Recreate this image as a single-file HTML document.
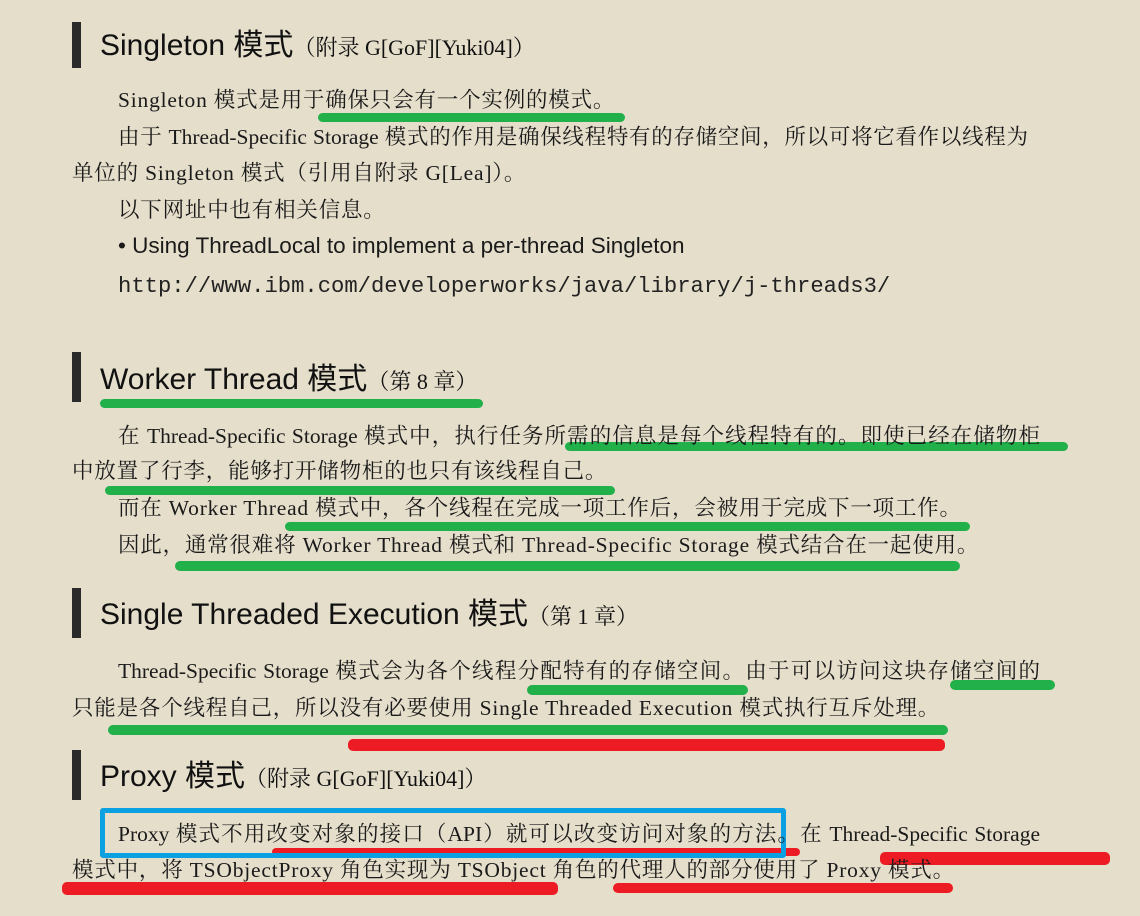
<!DOCTYPE html>
<html><head><meta charset="utf-8"><style>
html,body{margin:0;padding:0}
body{width:1140px;height:916px;background:#e5decb;position:relative;overflow:hidden;font-family:"Liberation Serif","Noto Serif CJK SC",serif;color:#1a1a1a}
.t{position:absolute;font-size:21.5px;line-height:24px;white-space:nowrap;letter-spacing:0.8px}
.j{letter-spacing:0;text-align:justify;text-align-last:justify;white-space:normal;height:26px;overflow:hidden}
.h{position:absolute;left:100px;font-family:"Liberation Sans","Noto Sans CJK SC",sans-serif;font-size:30px;line-height:34px;white-space:nowrap;color:#111}
.h small{font-family:"Liberation Serif","Noto Serif CJK SC",serif;font-size:22px}
.bar{position:absolute;left:72px;width:9px;background:#2a2a2a}
.u{position:absolute;border-radius:5px}
.g{background:#22b04a}.r{background:#ed1c24}
.m{position:absolute;font-family:"Liberation Mono",monospace;font-size:22.2px;line-height:24px;white-space:nowrap;color:#222}
.s{font-family:"Liberation Sans","Noto Sans CJK SC",sans-serif;font-size:22.5px;letter-spacing:0}
</style></head><body>
<div class="bar" style="top:22px;height:46px"></div>
<div class="h" style="top:29px">Singleton 模式<small>（附录 G[GoF][Yuki04]）</small></div>
<div class="u g" style="left:318px;top:113px;width:307px;height:9px"></div>
<div class="t" style="left:118px;top:88px">Singleton 模式是用于确保只会有一个实例的模式。</div>
<div class="t j" style="left:118px;top:125px;width:910px">由于 Thread-Specific Storage 模式的作用是确保线程特有的存储空间，所以可将它看作以线程为</div>
<div class="t" style="left:72px;top:161px">单位的 Singleton 模式（引用自附录 G[Lea]）。</div>
<div class="t" style="left:118px;top:198px">以下网址中也有相关信息。</div>
<div class="t s" style="left:118px;top:234px">• Using ThreadLocal to implement a per-thread Singleton</div>
<div class="m" style="left:118px;top:275px">http://www.ibm.com/developerworks/java/library/j-threads3/</div>

<div class="bar" style="top:352px;height:50px"></div>
<div class="u g" style="left:100px;top:399px;width:383px;height:9px"></div>
<div class="h" style="top:363px">Worker Thread 模式<small>（第 8 章）</small></div>
<div class="u g" style="left:565px;top:442px;width:503px;height:9px"></div>
<div class="u g" style="left:105px;top:486px;width:510px;height:9px"></div>
<div class="u g" style="left:285px;top:522px;width:685px;height:9px"></div>
<div class="u g" style="left:175px;top:561px;width:785px;height:10px"></div>
<div class="t j" style="left:118px;top:424px;width:922px">在 Thread-Specific Storage 模式中，执行任务所需的信息是每个线程特有的。即使已经在储物柜</div>
<div class="t" style="left:72px;top:459px">中放置了行李，能够打开储物柜的也只有该线程自己。</div>
<div class="t" style="left:118px;top:496px">而在 Worker Thread 模式中，各个线程在完成一项工作后，会被用于完成下一项工作。</div>
<div class="t" style="left:118px;top:533px">因此，通常很难将 Worker Thread 模式和 Thread-Specific Storage 模式结合在一起使用。</div>

<div class="bar" style="top:588px;height:50px"></div>
<div class="h" style="top:598px">Single Threaded Execution 模式<small>（第 1 章）</small></div>
<div class="u g" style="left:527px;top:685px;width:221px;height:10px"></div>
<div class="u g" style="left:950px;top:680px;width:105px;height:10px"></div>
<div class="u g" style="left:108px;top:725px;width:840px;height:10px"></div>
<div class="u r" style="left:348px;top:739px;width:597px;height:12px"></div>
<div class="t j" style="left:118px;top:659px;width:922px">Thread-Specific Storage 模式会为各个线程分配特有的存储空间。由于可以访问这块存储空间的</div>
<div class="t" style="left:72px;top:696px">只能是各个线程自己，所以没有必要使用 Single Threaded Execution 模式执行互斥处理。</div>

<div class="bar" style="top:750px;height:50px"></div>
<div class="h" style="top:760px">Proxy 模式<small>（附录 G[GoF][Yuki04]）</small></div>
<div class="u r" style="left:272px;top:848px;width:528px;height:8px"></div>
<div class="u r" style="left:880px;top:852px;width:230px;height:13px"></div>
<div class="u r" style="left:62px;top:882px;width:496px;height:13px"></div>
<div class="u r" style="left:613px;top:883px;width:340px;height:10px"></div>
<div style="position:absolute;left:100px;top:808px;width:676px;height:40px;border:5px solid #0aa0e2;border-radius:3px"></div>
<div class="t j" style="left:118px;top:822px;width:922px">Proxy 模式不用改变对象的接口（API）就可以改变访问对象的方法。在 Thread-Specific Storage</div>
<div class="t" style="left:72px;top:858px">模式中，将 TSObjectProxy 角色实现为 TSObject 角色的代理人的部分使用了 Proxy 模式。</div>
</body></html>
